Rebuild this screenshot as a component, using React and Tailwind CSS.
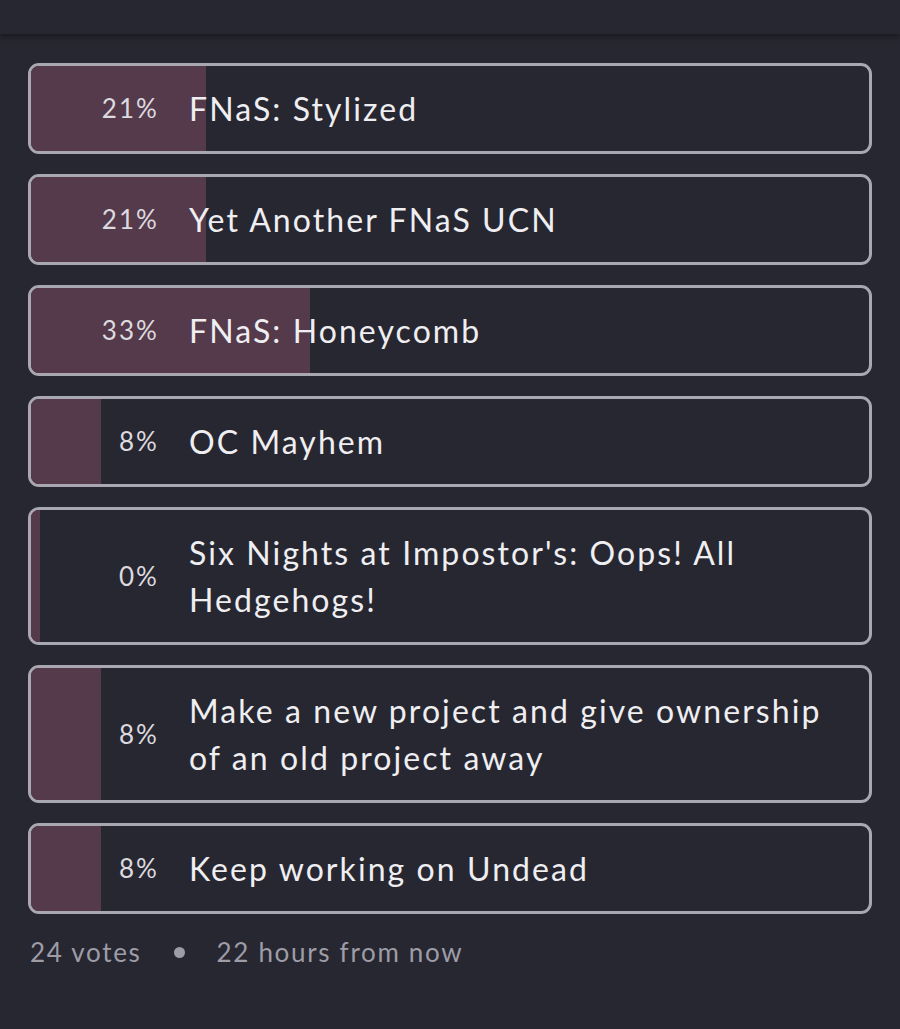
import React from "react";

const options = [
  { pct: 21, fill: 20.83, label: "FNaS: Stylized" },
  { pct: 21, fill: 20.83, label: "Yet Another FNaS UCN" },
  { pct: 33, fill: 33.33, label: "FNaS: Honeycomb" },
  { pct: 8, fill: 8.33, label: "OC Mayhem" },
  { pct: 0, fill: 0, label: "Six Nights at Impostor's: Oops! All Hedgehogs!" },
  { pct: 8, fill: 8.33, label: "Make a new project and give ownership of an old project away" },
  { pct: 8, fill: 8.33, label: "Keep working on Undead" },
];

function PollOption({ pct, fill, label }) {
  return (
    <div className="relative overflow-hidden rounded-[11px] border-[3px] border-[#a9a7b1] bg-[#272731]">
      <div
        className="absolute inset-y-0 left-0 min-w-[9px] bg-[#553a4c]"
        style={{ width: `${fill}%` }}
      />
      <div className="relative flex items-center py-[19px]">
        <div className="w-[128px] shrink-0 text-right text-[26px] tracking-[0.08em] text-[#dcdadf]">
          {pct}%
        </div>
        <div className="pl-[30px] pr-10 text-[32px] leading-[47px] tracking-[0.065em] text-[#efeef1]">
          {label}
        </div>
      </div>
    </div>
  );
}

export default function App() {
  return (
    <div
      className="min-h-[1029px] w-full bg-[#272731]"
      style={{ fontFamily: "Lato, 'Open Sans', sans-serif" }}
    >
      <div className="h-[34px] bg-[#272731] shadow-[0_3px_6px_rgba(0,0,0,0.35)]" />
      <div className="flex flex-col gap-5 px-7 pt-[29px]">
        {options.map((o) => (
          <PollOption key={o.label} {...o} />
        ))}
      </div>
      <div className="flex items-center px-[30px] pt-[19px] text-[26px] tracking-[0.065em] text-[#9e9ca7]">
        <span>24 votes</span>
        <span className="mx-[32px] h-[11px] w-[11px] rounded-full bg-[#9e9ca7]" />
        <span>22 hours from now</span>
      </div>
    </div>
  );
}
